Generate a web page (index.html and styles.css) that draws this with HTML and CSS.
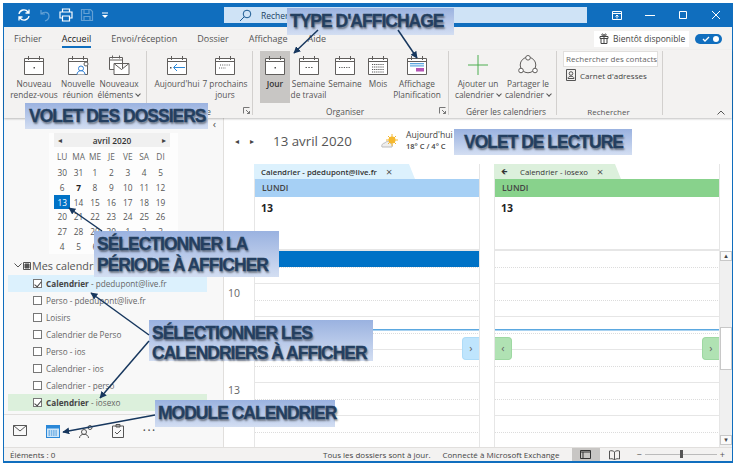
FILE: index.html
```html
<!DOCTYPE html>
<html lang="fr">
<head>
    <meta charset="UTF-8">
    <title>Outlook - Calendrier</title>
    <link rel="stylesheet" href="styles.css">
</head>
<body>
    <svg class="defs" width="0" height="0">
        <symbol id="cal" viewBox="0 0 20 20">
            <path d="M.5 3.500h19v16H.5zM.5 6.500h19M4.500 1v4M15.500 1v4" fill="#fff" stroke="#605e5c"/>
        </symbol>
    </svg>

    <div class="win">
        <div class="titlebar">
            <div class="quick">
                <svg width="14" height="14" viewBox="0 0 14 14" fill="none" stroke="#fff" stroke-width="1.3"><path d="M2 6a5 5 0 0 1 9-2l1 1M12 8a5 5 0 0 1-9 2L2 9M12 1.500v3.500H8.500M2 12.500V9h3.500"/></svg>
                <svg class="dim" width="14" height="14" viewBox="0 0 14 14" fill="none" stroke="#fff" stroke-width="1.200"><path d="M3 2v4h4M3 6c3-3 8-2 8 2 0 2-1 4-4 5"/></svg>
                <svg width="14" height="14" viewBox="0 0 14 14" fill="none" stroke="#fff" stroke-width="1.200"><path d="M3.500 4V1h7v3M3.500 10H1V4h12v6h-2.500M3.500 8h7v5h-7z"/></svg>
                <svg class="dim" width="14" height="14" viewBox="0 0 14 14" fill="none" stroke="#fff" stroke-width="1.200"><path d="M1.500 1.500h9l2 2v9h-11zM4 1.500v4h5v-4M4 12.500V8.500h6v4"/></svg>
                <svg width="8" height="14" viewBox="0 0 8 14" fill="#fff"><path d="M1 4.500h6v1H1zM1 7h6L4 10z"/></svg>
            </div>
            <div class="searchbar">
                <svg width="13" height="13" viewBox="0 0 13 13" fill="none" stroke="#1b5a92"><circle cx="8" cy="5" r="3.800"/><path d="M5.200 7.800 1 12"/></svg>
                <span>Rechercher</span>
            </div>
            <div class="winbtns">
                <svg width="12" height="12" viewBox="0 0 12 12" fill="none" stroke="#fff"><path d="M1.500 2.500h9v8h-9zM1.500 4.500h9"/><path d="M6 9.500V6M4.500 7.500 6 6l1.500 1.500"/></svg>
                <svg width="12" height="12" viewBox="0 0 12 12" stroke="#fff"><path d="M1 6.500h10"/></svg>
                <svg width="12" height="12" viewBox="0 0 12 12" fill="none" stroke="#fff"><path d="M2.500 2.500h7v7h-7z"/></svg>
                <svg width="12" height="12" viewBox="0 0 12 12" stroke="#fff"><path d="m2 2 8 8M10 2l-8 8"/></svg>
            </div>
        </div>

        <div class="tabs">
            <span class="tab tab-fichier">Fichier</span>
            <span class="tab tab-on">Accueil</span>
            <span class="tab">Envoi/réception</span>
            <span class="tab">Dossier</span>
            <span class="tab">Affichage</span>
            <span class="tab">Aide</span>
            <div class="soon">
                <svg width="10" height="11" viewBox="0 0 10 11" fill="none" stroke="#444"><path d="M1 3.500h8v2H1zM2 5.500h6v5H2zM5 3.500v7M5 3.500C3 3.500 2 1 3.500 1S5 3.500 5 3.500s0-2.500 1.500-2.500S7 3.500 5 3.500"/></svg>
                Bientôt disponible
            </div>
            <div class="toggle">
                <svg width="8" height="8" viewBox="0 0 8 8" fill="none" stroke="#fff" stroke-width="1.300"><path d="m1 4 2 2 4-4"/></svg>
                <i></i>
            </div>
        </div>

        <div class="ribbon">
            <div class="group g1">
                <div class="btns">
                    <div class="rb w48"><svg class="ico"><use href="#cal"/><rect x="9.500" y="12" width="1.500" height="1.500" fill="#555"/></svg>Nouveau<br>rendez-vous</div>
                    <div class="rb w40">
                        <svg class="ico" viewBox="0 0 20 20"><use href="#cal" width="20" height="20"/><circle cx="13" cy="13.500" r="2.500" fill="#fff" stroke="#2b7cd3"/><path d="M9 19.500c0-5 8-5 8 0" fill="#fff" stroke="#2b7cd3"/><circle cx="18" cy="9" r="2" fill="#fff" stroke="#605e5c"/></svg>
                        Nouvelle<br>réunion
                    </div>
                    <div class="rb w42">
                        <svg class="ico" viewBox="0 0 20 20" fill="#fff" stroke="#605e5c"><path d="M.5 2.500h13v12H.5zM.5 5h13M3.500 .5v3M10.500 .500v3"/><path d="M5 8.500h15v11H5zM5 8.500l7.500 6 7.500-6"/></svg>
                        <span>Nouveaux<br>éléments <i class="chev"></i></span>
                    </div>
                </div>
                <div class="glabel"></div>
            </div>
            <div class="group g2">
                <div class="btns">
                    <div class="rb w46">
                        <svg class="ico" viewBox="0 0 20 20"><use href="#cal" width="20" height="20"/><path d="M18 12.500H7M10 9l-3.500 3.500L10 16" fill="none" stroke="#2b88d8"/><rect x="3" y="12" width="1.500" height="1.500" fill="#555"/></svg>
                        Aujourd'hui
                    </div>
                    <div class="rb w48">
                        <svg class="ico" viewBox="0 0 20 20"><use href="#cal" width="20" height="20"/><path d="M5 10h11M4 13h7" stroke="#555" stroke-dasharray="1 1.200" fill="none"/></svg>
                        7 prochains<br>jours
                    </div>
                </div>
                <div class="glabel glabel-go">Atteindre</div>
                <svg class="launch" width="7" height="7" viewBox="0 0 7 7" fill="none" stroke="#777"><path d="M.5 6.500V.5h6M3 3l3.500 3.500M6.500 4v2.500H4"/></svg>
            </div>
            <div class="group g3">
                <div class="btns">
                    <div class="rb w30 rb-on"><svg class="ico"><use href="#cal"/><rect x="9.500" y="12" width="1.500" height="1.500" fill="#555"/></svg><b>Jour</b></div>
                    <div class="rb w35"><svg class="ico" viewBox="0 0 20 20"><use href="#cal" width="20" height="20"/><path d="M6.500 12.500h7" stroke="#555" stroke-dasharray="1.500 1.300" fill="none"/></svg>Semaine<br>de travail</div>
                    <div class="rb w36"><svg class="ico" viewBox="0 0 20 20"><use href="#cal" width="20" height="20"/><path d="M4 12.500h12" stroke="#555" stroke-dasharray="1.200 1.200" fill="none"/></svg>Semaine</div>
                    <div class="rb w28"><svg class="ico" viewBox="0 0 20 20"><use href="#cal" width="20" height="20"/><path d="M4 9.500h12M4 12h12M4 14.500h12M4 17h12" stroke="#555" stroke-dasharray="1.200 .9" fill="none"/></svg>Mois</div>
                    <div class="rb w50">
                        <svg class="ico" viewBox="0 0 20 20"><use href="#cal" width="20" height="20"/><rect x="3" y="8" width="14" height="3.500" fill="#5ba7e0"/><rect x="3" y="9.300" width="14" height="1" fill="#fff"/><rect x="9" y="13" width="8" height="3.500" fill="#b455b6"/></svg>
                        Affichage<br>Planification
                    </div>
                </div>
                <div class="glabel glabel-org">Organiser</div>
                <svg class="launch" width="7" height="7" viewBox="0 0 7 7" fill="none" stroke="#777"><path d="M.5 6.500V.5h6M3 3l3.500 3.500M6.500 4v2.500H4"/></svg>
            </div>
            <div class="group g4">
                <div class="btns">
                    <div class="rb w44">
                        <svg class="ico" viewBox="0 0 20 20" stroke="#4cae50"><path d="M10 0v20M0 10h20"/></svg>
                        <span>Ajouter un<br>calendrier <i class="chev"></i></span>
                    </div>
                    <div class="rb w50">
                        <svg class="ico" viewBox="0 0 20 20" fill="#fff" stroke="#605e5c"><circle cx="10" cy="10" r="7.800" fill="none"/><circle cx="10" cy="2.800" r="2.300"/><circle cx="3" cy="15.500" r="2.300"/><circle cx="17" cy="15.500" r="2.300"/></svg>
                        <span>Partager le<br>calendrier <i class="chev"></i></span>
                    </div>
                </div>
                <div class="glabel">Gérer les calendriers</div>
            </div>
            <div class="group g5">
                <div class="btns btns-col">
                    <div class="contacts">Rechercher des contacts</div>
                    <div class="book">
                        <svg width="10" height="12" viewBox="0 0 10 12" fill="none" stroke="#555"><path d="M.5.500h9v11h-9z"/><circle cx="5" cy="4.500" r="1.800"/><path d="M2 9.500c0-3 6-3 6 0z"/></svg>
                        Carnet d'adresses
                    </div>
                </div>
                <div class="glabel glabel-find">Rechercher</div>
            </div>
            <svg class="collapse" width="8" height="5" viewBox="0 0 8 5" fill="none" stroke="#555"><path d="m.5 4.500 3.500-3.500 3.500 3.500"/></svg>
        </div>

        <div class="main">
            <div class="folders">
                <div class="pane-collapse">‹</div>
                <div class="minical">
                    <div class="mc-head"><span class="tri">◂</span><b>avril 2020</b><span class="tri">▸</span></div>
                    <div class="mc-grid mc-days">
                        <span>LU</span><span>MA</span><span>ME</span><span>JE</span><span>VE</span><span>SA</span><span>DI</span>
                    </div>
                    <div class="mc-grid">
                        <span>30</span><span>31</span><span>1</span><span>2</span><span>3</span><span>4</span><span>5</span>
                        <span>6</span><span><b>7</b></span><span>8</span><span>9</span><span>10</span><span>11</span><span>12</span>
                        <span class="today">13</span><span>14</span><span>15</span><span>16</span><span>17</span><span>18</span><span>19</span>
                        <span>20</span><span>21</span><span>22</span><span>23</span><span>24</span><span>25</span><span>26</span>
                        <span>27</span><span>28</span><span>29</span><span>30</span><span>1</span><span>2</span><span>3</span>
                        <span>4</span><span>5</span><span>6</span><span>7</span><span>8</span><span>9</span><span>10</span>
                    </div>
                </div>
                <div class="mes">
                    <svg width="8" height="5" viewBox="0 0 8 5" fill="none" stroke="#555"><path d="m.5.500 3.500 3.500 3.500-3.500"/></svg>
                    <svg width="8" height="8" viewBox="0 0 8 8" fill="#555" stroke="#555"><path d="M.5.500h7v7h-7z" fill="none"/><path d="M2 2h4v4H2z"/></svg>
                    Mes calendriers
                </div>
                <ul class="callist">
                    <li class="row-blue"><i class="chk on"></i><span><b>Calendrier</b> - pdedupont@live.fr</span></li>
                    <li><i class="chk"></i><span>Perso - pdedupont@live.fr</span></li>
                    <li><i class="chk"></i><span>Loisirs</span></li>
                    <li><i class="chk"></i><span>Calendrier de Perso</span></li>
                    <li><i class="chk"></i><span>Perso - ios</span></li>
                    <li><i class="chk"></i><span>Calendrier - ios</span></li>
                    <li><i class="chk"></i><span>Calendrier - perso</span></li>
                    <li class="row-green"><i class="chk on"></i><span><b>Calendrier</b> - iosexo</span></li>
                </ul>
                <div class="modules">
                    <svg width="14" height="11" viewBox="0 0 14 11" fill="none" stroke="#555"><path d="M.5.500h13v10H.5zM.5.500 7 6l6.500-5.500"/></svg>
                    <svg width="14" height="14" viewBox="0 0 14 14"><rect x=".5" y="1.500" width="13" height="12" fill="#cfe6f8" stroke="#2b88d8"/><rect x=".5" y="1.500" width="13" height="3" fill="#2b88d8"/><path d="M2.500 7h9M2.500 9h9M2.500 11h9" stroke="#2b88d8" stroke-dasharray="1.500 .8"/></svg>
                    <svg width="14" height="14" viewBox="0 0 14 14" fill="none" stroke="#555"><circle cx="5" cy="8" r="2.500"/><path d="M.5 14c0-5 9-5 9 0"/><circle cx="11" cy="3.500" r="2"/></svg>
                    <svg width="12" height="14" viewBox="0 0 12 14" fill="none" stroke="#555"><path d="M.5 2h11v11.500H.5zM4 .5h4V3H4zM3 8l2 2 4-4"/></svg>
                    <span class="more">•••</span>
                </div>
            </div>

            <div class="reader">
                <div class="datebar">
                    <span class="tri">◂</span><span class="tri tri2">▸</span>
                    <span class="date">13 avril 2020</span>
                    <svg class="sun" width="18" height="14" viewBox="0 0 18 14"><path d="M1 13c-1-2 1-4 3-4 1-2 4-2 5 0 2 0 3 2 2 4z" fill="#eee" stroke="#bbb"/><circle cx="11" cy="6" r="3.500" fill="#f5b82e"/><path d="M11 0v12M5 6h12M7 2l8 8M15 2l-8 8" stroke="#f5b82e"/></svg>
                    <div class="weather">Aujourd'hui<br><b>18° C / 4° C</b></div>
                </div>
                <div class="calbody">
                    <div class="gutter">
                        <span>10</span><span>11</span><span>12</span><span>13</span><span>14</span>
                    </div>
                    <div class="col col-blue">
                        <div class="coltab"><b>Calendrier - pdedupont@live.fr</b><em>×</em></div>
                        <div class="lundi">LUNDI</div>
                        <div class="allday">13</div>
                        <div class="hours">
                            <div class="hour slot"></div><div class="hour"></div><div class="hour"></div><div class="hour"></div><div class="hour"></div><div class="hour"></div>
                            <div class="now"></div>
                            <div class="peek peek-r">›</div>
                        </div>
                    </div>
                    <div class="col col-green">
                        <div class="coltab"><span class="backarrow">🡸</span><span>Calendrier - iosexo</span><em>×</em></div>
                        <div class="lundi">LUNDI</div>
                        <div class="allday">13</div>
                        <div class="hours">
                            <div class="hour"></div><div class="hour"></div><div class="hour"></div><div class="hour"></div><div class="hour"></div><div class="hour"></div>
                            <div class="now"></div>
                            <div class="peek peek-l">‹</div>
                            <div class="peek peek-r">›</div>
                        </div>
                    </div>
                    <div class="scroll">
                        <div class="sb-btn">▴</div>
                        <div class="sb-track"><div class="sb-thumb"></div></div>
                        <div class="sb-btn">▾</div>
                    </div>
                </div>
            </div>
        </div>

        <div class="status">
            <span class="st-left">Éléments : 0</span>
            <span>Tous les dossiers sont à jour.</span>
            <span class="st-conn">Connecté à Microsoft Exchange</span>
            <div class="st-view">
                <svg width="11" height="9" viewBox="0 0 11 9" fill="none" stroke="#333"><path d="M.5.500h10v8H.5zM.5 2h10M3 2v6.500"/></svg>
            </div>
            <svg class="st-read" width="11" height="10" viewBox="0 0 11 10" fill="none" stroke="#555"><path d="M5.500 2v8M5.500 2C4 .5 2 .5.500 1v8c1.500-.5 3.500-.5 5 1 1.500-1.500 3.500-1.500 5-1V1C9 .5 7 .5 5.500 2"/></svg>
            <div class="zoom"><span>−</span><div class="zline"><i></i></div><span>+</span></div>
        </div>
    </div>

    <!-- annotations posees sur la capture -->
    <div class="note n-type">TYPE D'AFFICHAGE</div>
    <div class="note n-dossiers">VOLET DES DOSSIERS</div>
    <div class="note n-lecture">VOLET DE LECTURE</div>
    <div class="note n-periode">SÉLECTIONNER LA<br>PÉRIODE À AFFICHER</div>
    <div class="note n-cals">SÉLECTIONNER LES<br>CALENDRIERS À AFFICHER</div>
    <div class="note n-module">MODULE CALENDRIER</div>
    <svg class="arrows" width="735" height="465" viewBox="0 0 735 465" fill="none" stroke="#17375e" stroke-width="1.500">
        <defs>
            <marker id="head" viewBox="0 0 10 10" refX="9" refY="5" markerWidth="7" markerHeight="7" orient="auto-start-reverse" markerUnits="userSpaceOnUse" >
                <path d="M0 0 10 5 0 10z" fill="#17375e" stroke="none"/>
            </marker>
        </defs>
        <path d="M318 30 294 53" marker-end="url(#head)"/>
        <path d="M398 30 417 58" marker-end="url(#head)"/>
        <path d="M102 231 69 208" marker-end="url(#head)"/>
        <path d="M149 335 91 293" marker-end="url(#head)"/>
        <path d="M149 341 100 398" marker-end="url(#head)"/>
        <path d="M155 415 63 432" marker-end="url(#head)"/>
    </svg>
</body>
</html>
```

FILE: styles.css
```css
* {
    box-sizing: border-box;
}
html, body {
    margin: 0;
    padding: 0;
    background: #fff;
    overflow: hidden;
}
body {
    position: relative;
    width: 735px;
    height: 465px;
    font-family: "Open Sans", "Noto Sans", sans-serif;
    font-size: 8.3px;
    color: #444;
}
.defs {
    position: absolute;
}
svg {
    display: block;
    flex: none;
}
.win {
    margin: 3px 0 0 3px;
    width: 730px;
    height: 460px;
    border: 1px solid #106ebe;
    border-width: 0 1px 2px 1px;
    display: flex;
    flex-direction: column;
    background: #f3f2f1;
}

/* title bar */
.titlebar {
    height: 24px;
    background: #106ebe;
    display: flex;
    align-items: center;
    flex: none;
}
.quick {
    display: flex;
    gap: 7px;
    padding-left: 13px;
    width: 220px;
    align-items: center;
}
.dim {
    opacity: .35;
}
.searchbar {
    width: 363px;
    height: 16px;
    background: #cfe3f6;
    display: flex;
    align-items: center;
    gap: 9px;
    padding-left: 15px;
    color: #1b3f63;
    font-size: 8.5px;
}
.winbtns {
    display: flex;
    gap: 21px;
    padding-left: 24px;
}

/* tabs */
.tabs {
    height: 23px;
    display: flex;
    align-items: center;
    gap: 20px;
    padding-left: 10px;
    font-size: 9px;
    flex: none;
}
.tab {
    color: #555;
    line-height: 19px;
}
.tab-on {
    color: #222;
    box-shadow: inset 0 -2px 0 #106ebe;
}
.soon {
    margin-left: 248px;
    background: #fff;
    height: 16px;
    width: 95px;
    flex: none;
    display: flex;
    align-items: center;
    gap: 4px;
    padding-left: 5px;
    color: #444;
    font-size: 8.5px;
    white-space: nowrap;
}
.toggle {
    margin-left: -14px;
    width: 27px;
    height: 10px;
    flex: none;
    border-radius: 5px;
    background: #106ebe;
    display: flex;
    align-items: center;
    justify-content: space-between;
    padding: 0 3px 0 7px;
}
.toggle i {
    width: 6px;
    height: 6px;
    background: #fff;
    border-radius: 50%;
}

/* ribbon */
.ribbon {
    height: 68px;
    display: flex;
    flex: none;
    position: relative;
    box-shadow: 0 1px 2px rgba(0,0,0,.25);
    z-index: 1;
}
.group {
    display: flex;
    flex-direction: column;
    border-right: 1px solid #d2d0ce;
    height: 64px;
    margin-top: 1px;
    position: relative;
}
.g1 { width: 143px; padding-left: 6px; }
.g2 { width: 106px; padding-left: 7px; }
.g3 { width: 196px; padding-left: 7px; }
.g4 { width: 108px; padding-left: 7px; }
.g5 { width: 106px; padding-left: 6px; font-size: 8px; }
.btns {
    display: flex;
    height: 52px;
    flex: none;
}
.btns-col {
    flex-direction: column;
}
.rb {
    display: flex;
    flex-direction: column;
    align-items: center;
    text-align: center;
    line-height: 11px;
    white-space: nowrap;
    color: #555;
    padding-top: 4px;
}
.chev {
    display: inline-block;
    width: 4px;
    height: 4px;
    border: solid #555;
    border-width: 0 1px 1px 0;
    transform: rotate(45deg);
    margin: 0 0 2px 1px;
}
.rb-on {
    background: #c8c6c4;
}
.rb-on b {
    font-weight: 600;
    color: #333;
}
.ico {
    width: 20px;
    height: 20px;
    margin-bottom: 3px;
    overflow: visible;
}
.w28 { width: 28px; }
.w30 { width: 30px; margin-right: 1px; }
.w35 { width: 35px; margin-right: 1px; }
.w36 { width: 36px; margin-right: 1px; }
.w40 { width: 40px; }
.w42 { width: 42px; }
.w44 { width: 44px; margin-right: 3px; }
.w46 { width: 46px; margin-right: 1px; }
.w48 { width: 48px; }
.w50 { width: 50px; }
.glabel {
    text-align: center;
    line-height: 12px;
    color: #555;
    margin-top: 3px;
}
.glabel-go {
    text-align: right;
    padding-right: 41px;
}
.glabel-org {
    padding-right: 18px;
}
.glabel-find {
    padding-right: 8px;
}
.launch {
    position: absolute;
    right: 2px;
    bottom: 1px;
}
.contacts {
    width: 95px;
    height: 16px;
    background: #fff;
    border: 1px solid #e1dfdd;
    line-height: 14px;
    padding-left: 2px;
    color: #666;
    white-space: nowrap;
    overflow: hidden;
}
.book {
    display: flex;
    align-items: center;
    gap: 4px;
    margin: 1px 0 0 3px;
    height: 14px;
}
.collapse {
    position: absolute;
    right: 7px;
    bottom: 3px;
}

/* body */
.main {
    flex: 1;
    display: flex;
    min-height: 0;
    background: #fff;
}
.folders {
    width: 220px;
    flex: none;
    background: #f8f8f8;
    border-right: 1px solid #e1dfdd;
    display: flex;
    flex-direction: column;
    position: relative;
}
.pane-collapse {
    position: absolute;
    right: 7px;
    top: 0;
    font-size: 11px;
    line-height: 12px;
    color: #555;
}
.minical {
    width: 129px;
    margin: 15px 0 0 45px;
    padding-left: 5px;
    background: #fdfdfd;
    flex: none;
}
.mc-head {
    height: 14px;
    width: 116px;
    background: #f0f0f0;
    display: flex;
    justify-content: space-between;
    align-items: center;
    padding: 0 4px;
    color: #333;
}
.mc-head b {
    font-weight: 600;
}
.tri {
    color: #444;
    font-size: 8px;
    font-family: "DejaVu Sans", sans-serif;
}
.mc-grid {
    display: grid;
    grid-template-columns: repeat(7, 16.4px);
    grid-auto-rows: 14.8px;
    text-align: center;
    line-height: 15px;
    color: #555;
}
.mc-days {
    margin: 2px 0 1px;
    height: 15px;
    color: #666;
}
.mc-grid b {
    color: #222;
}
.today {
    background: #0072c6;
    color: #fff;
}
.mes {
    display: flex;
    align-items: center;
    gap: 1px;
    margin: 5px 0 0 10px;
    height: 14px;
    font-size: 10.8px;
    color: #555;
    white-space: nowrap;
}
.callist {
    list-style: none;
    margin: 2px 0 0;
    padding: 0;
    font-size: 8.2px;
    color: #666;
}
.callist li {
    height: 17px;
    width: 199px;
    margin-left: 4px;
    display: flex;
    align-items: center;
    gap: 4px;
    padding-left: 25px;
}
.callist b {
    font-weight: 700;
    color: #444;
}
.row-blue {
    background: #dcf1fd;
}
.row-green {
    background: #dcf0dc;
}
.chk {
    width: 9px;
    height: 9px;
    border: 1px solid #777;
    background: #fff;
    flex: none;
    position: relative;
}
.chk.on::after {
    content: "";
    position: absolute;
    left: 2px;
    top: 0;
    width: 3px;
    height: 6px;
    border: solid #444;
    border-width: 0 1px 1px 0;
    transform: rotate(40deg);
}
.modules {
    margin-top: 3px;
    flex: 1;
    border-top: 1px solid #e1dfdd;
    display: flex;
    align-items: center;
    padding-left: 9px;
    gap: 19px;
}
.more {
    letter-spacing: 2px;
    font-size: 7px;
    color: #555;
}

/* reading pane */
.reader {
    flex: 1;
    display: flex;
    flex-direction: column;
    min-width: 0;
}
.datebar {
    height: 46px;
    display: flex;
    align-items: center;
    padding: 0 0 0 11px;
    flex: none;
}
.tri2 {
    margin-left: 11px;
}
.date {
    font-size: 13.3px;
    color: #555;
    margin-left: 19px;
    width: 108px;
}
.sun {
    margin-right: 7px;
}
.weather {
    line-height: 11px;
    font-size: 8.6px;
    margin-top: -1px;
}
.weather b {
    font-weight: 600;
    font-size: 7.5px;
}
.calbody {
    flex: 1;
    display: flex;
    min-height: 0;
}
.gutter {
    width: 30px;
    flex: none;
    padding-top: 122px;
    display: flex;
    flex-direction: column;
    font-size: 10.5px;
    color: #666;
}
.gutter span {
    height: 32.600px;
    line-height: 15px;
    padding-left: 4px;
}
.col {
    width: 226px;
    flex: none;
    display: flex;
    flex-direction: column;
    border: solid #e6e6e6;
    border-width: 0 1px;
}
.col-blue {
    margin-right: 14px;
}
.coltab {
    height: 15px;
    margin: 0 0 0 -1px;
    display: flex;
    align-items: center;
    font-size: 7.8px;
    padding-left: 7px;
    color: #333;
    background: #dcf1fd;
    clip-path: polygon(0 0, calc(100% - 6px) 0, 100% 100%, 0 100%);
    white-space: nowrap;
    flex: none;
    width: 161px;
}
.coltab em {
    font-style: normal;
    font-size: 11px;
    margin-left: 9px;
    color: #555;
}
.coltab b {
    font-weight: 600;
}
.col-green .coltab {
    width: 127px;
    background: #dcf0dc;
}
.backarrow {
    width: 19px;
    font-family: "DejaVu Sans", sans-serif;
    font-size: 8px;
}
.lundi {
    height: 18px;
    background: #a6d0f5;
    line-height: 18px;
    padding-left: 7px;
    font-size: 8.5px;
    font-weight: 600;
    color: #444;
    flex: none;
}
.col-green .lundi {
    background: #88d28c;
}
.allday {
    height: 54px;
    padding: 4px 0 0 6px;
    font-weight: 700;
    font-size: 10.5px;
    color: #222;
    border-bottom: 2px solid #e6e6e6;
    flex: none;
}
.hours {
    flex: 1;
    position: relative;
    overflow: hidden;
}
.hour {
    height: 33px;
    border-bottom: 1px solid #e6e6e6;
    background: repeating-linear-gradient(90deg, #dcdcdc 0 1px, transparent 1px 2px) 0 16px / 100% 1px no-repeat;
    position: relative;
}
.hour.slot::before {
    content: "";
    position: absolute;
    left: 0;
    right: 0;
    top: 0;
    height: 16px;
    background: #0072c6;
}
.now {
    position: absolute;
    left: 0;
    right: 0;
    top: 78px;
    height: 1px;
    background: #5ba8e0;
    box-shadow: 0 1px 0 #a9d2f0;
}
.peek {
    position: absolute;
    top: 86px;
    width: 17px;
    height: 23px;
    text-align: center;
    line-height: 20px;
    font-size: 11px;
    color: #666;
}
.peek-r {
    right: 0;
    border-radius: 4px 0 0 4px;
    background: #bfe5fd;
    border: 1px solid #aedcf8;
    border-right: 0;
}
.peek-l {
    left: 0;
    border-radius: 0 4px 4px 0;
    background: #b0e2b3;
    border: 1px solid #9ed8a2;
    border-left: 0;
}
.col-green .peek-r {
    background: #b0e2b3;
    border-color: #9ed8a2;
}
.scroll {
    flex: 1;
    background: #f0f0f0;
    margin-top: 87px;
    display: flex;
    flex-direction: column;
    padding-bottom: 2px;
}
.sb-btn {
    height: 10px;
    background: #fafafa;
    border: 1px solid #c8c8c8;
    font-size: 7px;
    line-height: 8px;
    text-align: center;
    font-family: "DejaVu Sans", sans-serif;
    color: #444;
    flex: none;
}
.sb-track {
    flex: 1;
    padding-top: 66px;
}
.sb-thumb {
    height: 43px;
    background: #fff;
    border: 1px solid #c8c8c8;
}

/* status bar */
.status {
    height: 14px;
    display: flex;
    align-items: center;
    flex: none;
    font-size: 8px;
    color: #444;
    border-top: 1px solid #e1dfdd;
}
.st-left {
    margin-left: 6px;
    width: 313px;
}
.st-conn {
    margin-left: 12px;
    width: 129px;
}
.st-view {
    width: 28px;
    height: 100%;
    background: #c8c6c4;
    display: flex;
    align-items: center;
    justify-content: center;
}
.st-read {
    margin: 0 17px 0 9px;
}
.zoom {
    display: flex;
    align-items: center;
    gap: 3px;
    font-size: 9px;
    color: #555;
}
.zline {
    width: 72px;
    height: 1px;
    background: #bbb;
    position: relative;
}
.zline i {
    position: absolute;
    left: 35px;
    top: -4px;
    width: 3px;
    height: 8px;
    background: #555;
}

/* annotations */
.note {
    position: absolute;
    z-index: 5;
    background: linear-gradient(#9ab2e0, #d3def2);
    font-family: "Liberation Sans", Arial, sans-serif;
    font-weight: 700;
    font-size: 17.5px;
    line-height: 21px;
    letter-spacing: -1px;
    color: #243f60;
    -webkit-text-stroke: .3px #243f60;
    text-shadow: 1px 2px 2px rgba(0,0,0,.45);
    white-space: nowrap;
    padding: 3px 0 0 3px;
}
.n-type { left: 287px; top: 8px; width: 167px; height: 27px; }
.n-dossiers { left: 25px; top: 103px; width: 183px; height: 26px; padding-left: 4px; }
.n-lecture { left: 454px; top: 129px; width: 178px; height: 26px; padding-left: 10px; }
.n-periode { left: 94px; top: 231px; width: 185px; height: 46px; }
.n-cals { left: 149px; top: 320px; width: 224px; height: 41px; line-height: 20px; }
.n-module { left: 155px; top: 400px; width: 180px; height: 27px; }
.arrows {
    position: absolute;
    left: 0;
    top: 0;
    z-index: 6;
}
```
